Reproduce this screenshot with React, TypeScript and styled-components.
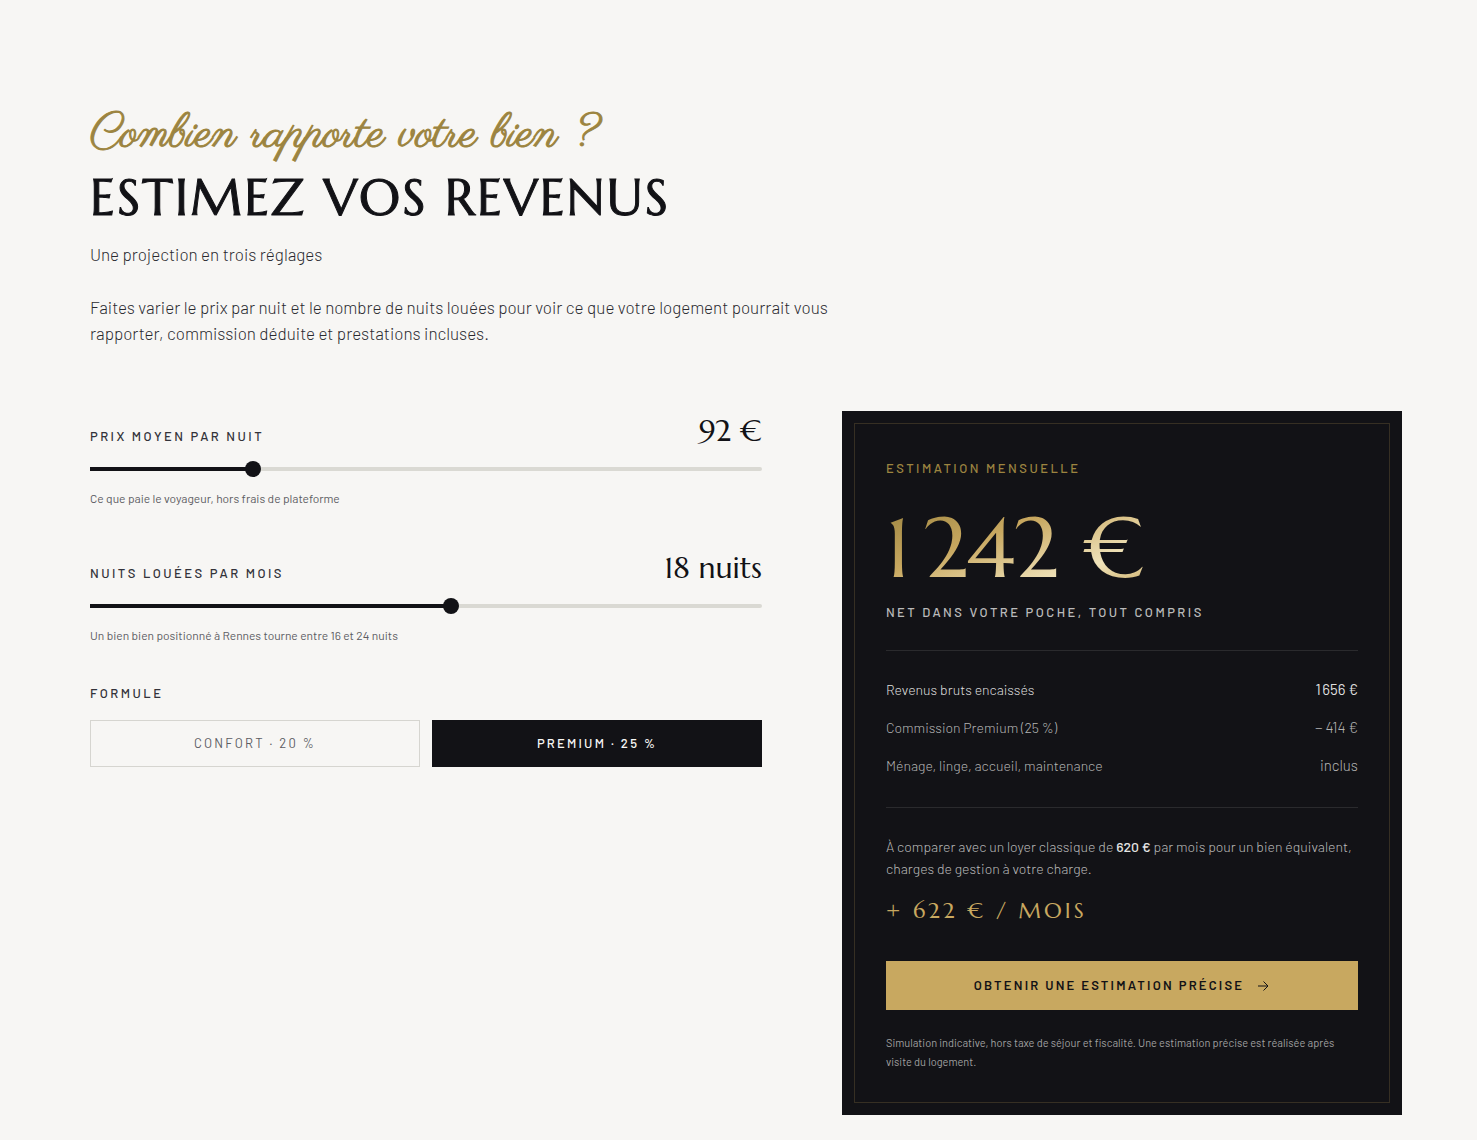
import React, { useId, useState } from 'react';
import styled, { createGlobalStyle, css } from 'styled-components';

const INK = '#121216';
const PAPER = '#f7f6f4';
const GOLD = '#c8a860';
const BRONZE = '#9c8440';

const sans = '"Barlow", "Roboto", sans-serif';
const display = '"Marcellus", "Liberation Serif", serif';
const script = '"Parisienne", "Liberation Serif", cursive';

const NNBSP = '\u202f';
const NBSP = '\u00a0';

const GlobalStyle = createGlobalStyle`
  *, *::before, *::after { box-sizing: border-box; }
  body {
    margin: 0;
    background: ${PAPER};
    color: ${INK};
    font-family: ${sans};
    font-weight: 300;
    -webkit-font-smoothing: antialiased;
  }
  h2, p, dl, dd, dt, fieldset, legend { margin: 0; padding: 0; border: 0; }
`;

const overline = css`
  font-size: 13px;
  font-weight: 500;
  line-height: 20px;
  letter-spacing: 0.19em;
  text-transform: uppercase;
`;

const Section = styled.section`
  padding: 105px 75px 25px 90px;
`;

const Header = styled.header`
  max-width: 760px;
  margin-bottom: 65px;
`;

const Kicker = styled.span`
  display: block;
  font-family: ${script};
  font-size: 48px;
  font-weight: 400;
  line-height: 60px;
  color: ${BRONZE};
  -webkit-text-stroke: 1px ${BRONZE};
`;

const Title = styled.h2`
  font-family: ${display};
  font-size: 51px;
  font-weight: 400;
  line-height: 64px;
  letter-spacing: 0.04em;
  text-transform: uppercase;
  -webkit-text-stroke: 1px ${INK};
`;

const Intro = styled.p`
  margin-top: 12px;
  font-size: 17px;
  line-height: 26px;
  color: #2a2a30;

  & + & { margin-top: 27px; }
`;

const Columns = styled.div`
  display: grid;
  grid-template-columns: 1.2fr 1fr;
  gap: 80px;
  align-items: start;

  @media (max-width: 900px) {
    grid-template-columns: 1fr;
  }
`;

const Controls = styled.div`
  display: flex;
  flex-direction: column;
  gap: 39px;
`;

const Field = styled.div`
  display: flex;
  flex-direction: column;
`;

const FieldHead = styled.div`
  display: flex;
  justify-content: space-between;
  align-items: baseline;
`;

const Label = styled.label`
  ${overline}
  color: #33333a;
`;

const Value = styled.output`
  font-family: ${display};
  font-size: 30px;
  font-weight: 400;
  line-height: 40px;
`;

const Range = styled.input<{ $fill: number }>`
  appearance: none;
  width: 100%;
  height: 4px;
  margin: 16px 0;
  border-radius: 0 2px 2px 0;
  background: linear-gradient(to right, ${INK} ${p => p.$fill}%, #dad9d3 ${p => p.$fill}%);
  cursor: pointer;

  &::-webkit-slider-thumb {
    appearance: none;
    width: 16px;
    height: 16px;
    border-radius: 50%;
    background: ${INK};
  }
  &::-moz-range-thumb {
    width: 16px;
    height: 16px;
    border: 0;
    border-radius: 50%;
    background: ${INK};
  }
`;

const Hint = styled.p`
  font-size: 12px;
  font-weight: 400;
  line-height: 22px;
  color: #5c5c62;
`;

const Plans = styled.fieldset`
  min-width: 0;
`;

const Legend = styled.legend`
  ${overline}
  line-height: 16px;
  color: #33333a;
`;

const PlanRow = styled.div`
  display: grid;
  grid-template-columns: 1fr 1fr;
  gap: 12px;
  margin-top: 19px;
`;

const PlanButton = styled.button<{ $active: boolean }>`
  padding: 13px 16px;
  border: 1px solid ${p => (p.$active ? INK : '#d6d5d0')};
  border-radius: 0;
  background: ${p => (p.$active ? INK : 'transparent')};
  color: ${p => (p.$active ? PAPER : '#5c5c62')};
  font-family: ${sans};
  font-size: 13px;
  font-weight: ${p => (p.$active ? 500 : 400)};
  line-height: 19px;
  letter-spacing: 0.17em;
  text-transform: uppercase;
  cursor: pointer;
`;

const Card = styled.aside`
  padding: 12px;
  background: ${INK};
  color: #bababa;
`;

const CardFrame = styled.div`
  padding: 34px 31px 31px;
  border: 1px solid #362f23;
`;

const CardTitle = styled.p`
  ${overline}
  color: ${BRONZE};
`;

const Amount = styled.p`
  width: fit-content;
  margin-top: 26px;
  font-family: ${display};
  font-size: 84px;
  line-height: 88px;
  color: transparent;
  background: linear-gradient(160deg, ${BRONZE} 0%, ${GOLD} 38%, #f0e3bb 75%, ${GOLD} 100%);
  background-clip: text;
  -webkit-background-clip: text;
`;

const AmountNote = styled.p`
  ${overline}
  margin-top: 10px;
`;

const Breakdown = styled.dl`
  display: flex;
  flex-direction: column;
  gap: 11px;
  margin-top: 28px;
  padding: 25px 0 28px;
  border: solid #2a2a2d;
  border-width: 1px 0;
`;

const BreakdownRow = styled.div<{ $strong?: boolean }>`
  display: flex;
  justify-content: space-between;
  align-items: baseline;
  line-height: 26px;
  color: ${p => (p.$strong ? '#dedede' : '#b4b4b4')};

  dt { font-size: 14px; }
  dd { font-size: 15px; font-weight: ${p => (p.$strong ? 400 : 300)}; }
`;

const Compare = styled.p`
  margin-top: 28px;
  font-size: 14px;
  line-height: 22px;

  strong { font-weight: 500; color: #e6e6e4; }
`;

const Gain = styled.p`
  margin-top: 15px;
  font-family: ${display};
  font-size: 22px;
  line-height: 32px;
  letter-spacing: 0.14em;
  color: ${GOLD};
  text-transform: uppercase;
`;

const Cta = styled.a`
  display: flex;
  justify-content: center;
  align-items: center;
  gap: 12px;
  margin-top: 34px;
  padding: 14px 16px;
  background: ${GOLD};
  color: ${INK};
  font-size: 13px;
  font-weight: 600;
  line-height: 21px;
  letter-spacing: 0.17em;
  text-transform: uppercase;
  text-decoration: none;
`;

const Legal = styled.p`
  margin-top: 23px;
  font-size: 11px;
  font-weight: 400;
  line-height: 19px;
  color: #a0a0a0;
`;

const Arrow = () => (
  <svg width="14" height="14" viewBox="0 0 14 14" fill="none" stroke="currentColor" strokeWidth="1" aria-hidden="true">
    <path d="M2 7h10M7.5 2.5L12 7l-4.5 4.5" />
  </svg>
);

const euros = (n: number) =>
  String(n).replace(/\B(?=(\d{3})+$)/g, NNBSP) + NBSP + '€';

interface SliderProps {
  label: string;
  hint: string;
  min: number;
  max: number;
  value: number;
  display: string;
  onChange: (value: number) => void;
}

function Slider({ label, hint, min, max, value, display, onChange }: SliderProps) {
  const id = useId();
  return (
    <Field>
      <FieldHead>
        <Label htmlFor={id}>{label}</Label>
        <Value htmlFor={id}>{display}</Value>
      </FieldHead>
      <Range
        id={id}
        type="range"
        min={min}
        max={max}
        value={value}
        $fill={((value - min) / (max - min)) * 100}
        onChange={e => onChange(Number(e.target.value))}
      />
      <Hint>{hint}</Hint>
    </Field>
  );
}

const PLANS = [
  { name: 'Confort', rate: 20 },
  { name: 'Premium', rate: 25 },
];

const CLASSIC_RENT = 620;

export default function App() {
  const [price, setPrice] = useState(92);
  const [nights, setNights] = useState(18);
  const [plan, setPlan] = useState(PLANS[1]);

  const gross = price * nights;
  const fee = Math.round((gross * plan.rate) / 100);
  const net = gross - fee;
  const gain = net - CLASSIC_RENT;

  return (
    <>
      <GlobalStyle />
      <Section>
        <Header>
          <Kicker>Combien rapporte votre bien ?</Kicker>
          <Title>Estimez vos revenus</Title>
          <Intro>Une projection en trois réglages</Intro>
          <Intro>
            Faites varier le prix par nuit et le nombre de nuits louées pour voir ce que votre logement pourrait
            vous rapporter, commission déduite et prestations incluses.
          </Intro>
        </Header>

        <Columns>
          <Controls>
            <Slider
              label="Prix moyen par nuit"
              hint="Ce que paie le voyageur, hors frais de plateforme"
              min={40}
              max={260}
              value={price}
              display={euros(price)}
              onChange={setPrice}
            />
            <Slider
              label="Nuits louées par mois"
              hint="Un bien bien positionné à Rennes tourne entre 16 et 24 nuits"
              min={4}
              max={30}
              value={nights}
              display={`${nights} nuits`}
              onChange={setNights}
            />
            <Plans>
              <Legend>Formule</Legend>
              <PlanRow>
                {PLANS.map(p => (
                  <PlanButton
                    key={p.name}
                    type="button"
                    $active={p === plan}
                    aria-pressed={p === plan}
                    onClick={() => setPlan(p)}
                  >
                    {p.name} · {p.rate}{NBSP}%
                  </PlanButton>
                ))}
              </PlanRow>
            </Plans>
          </Controls>

          <Card>
            <CardFrame>
              <CardTitle>Estimation mensuelle</CardTitle>
              <Amount>{euros(net)}</Amount>
              <AmountNote>Net dans votre poche, tout compris</AmountNote>
              <Breakdown>
                <BreakdownRow $strong>
                  <dt>Revenus bruts encaissés</dt>
                  <dd>{euros(gross)}</dd>
                </BreakdownRow>
                <BreakdownRow>
                  <dt>Commission {plan.name} ({plan.rate}{NBSP}%)</dt>
                  <dd>− {euros(fee)}</dd>
                </BreakdownRow>
                <BreakdownRow>
                  <dt>Ménage, linge, accueil, maintenance</dt>
                  <dd>inclus</dd>
                </BreakdownRow>
              </Breakdown>
              <Compare>
                À comparer avec un loyer classique de <strong>{euros(CLASSIC_RENT)}</strong> par mois pour un bien
                équivalent, charges de gestion à votre charge.
              </Compare>
              <Gain>
                {gain < 0 ? '−' : '+'} {euros(Math.abs(gain))} / mois
              </Gain>
              <Cta href="#contact">
                Obtenir une estimation précise
                <Arrow />
              </Cta>
              <Legal>
                Simulation indicative, hors taxe de séjour et fiscalité. Une estimation précise est réalisée après
                visite du logement.
              </Legal>
            </CardFrame>
          </Card>
        </Columns>
      </Section>
    </>
  );
}
